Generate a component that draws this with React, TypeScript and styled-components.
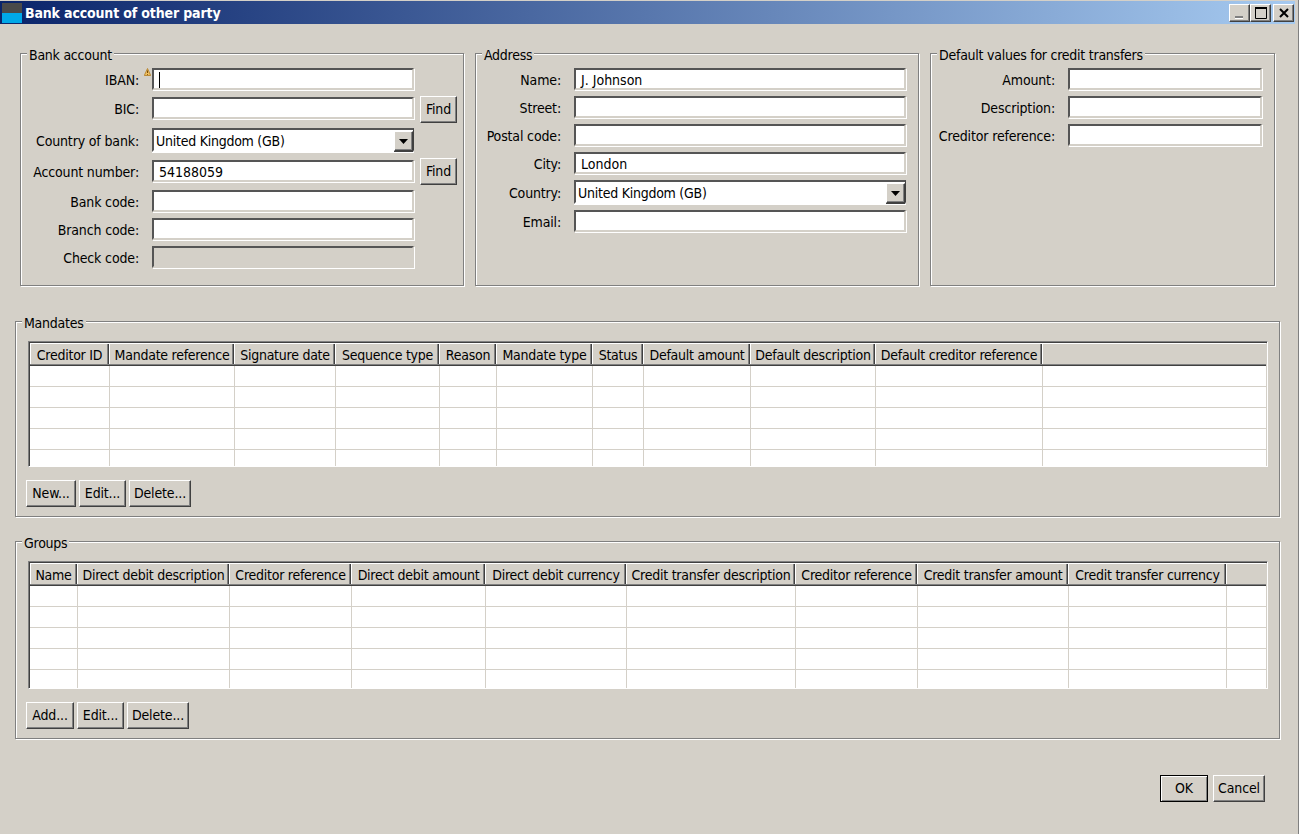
import React from "react";
import styled, { createGlobalStyle } from "styled-components";

const Global = createGlobalStyle`
  html, body { margin: 0; padding: 0; background: #d4d0c8; }
  * { box-sizing: border-box; }
`;

const Window = styled.div`
  width: 1299px;
  height: 834px;
  overflow: hidden;
  background: #d4d0c8;
  border-right: 1px solid #808080;
  font-family: "DejaVu Sans", "Noto Sans", sans-serif;
  font-stretch: condensed;
  font-size: 14px;
  letter-spacing: -0.15px;
  color: #000;
  display: flex;
  flex-direction: column;
`;

const TitleBar = styled.header`
  height: 23px;
  margin: 1px 3px 0 0;
  padding: 0 1px 0 2px;
  flex: none;
  display: flex;
  align-items: center;
  background: linear-gradient(90deg, #0a246a 0%, #a6caf0 100%);
`;

const AppIcon = styled.svg`
  width: 20px;
  height: 20px;
  flex: none;
`;

const Title = styled.span`
  margin-left: 3px;
  color: #fff;
  font-weight: 700;
  letter-spacing: -0.15px;
  flex: 1;
`;

const CaptionButton = styled.button<{ $gap?: number }>`
  width: 21px;
  height: 18px;
  margin-left: ${(p) => p.$gap ?? 0}px;
  padding: 0;
  display: flex;
  align-items: center;
  justify-content: center;
  background: #d4d0c8;
  border: 1px solid;
  border-color: #fff #404040 #404040 #fff;
  box-shadow: inset -1px -1px 0 #808080;
`;

const Content = styled.main`
  flex: 1;
  padding: 29px 18px 0 15px;
  display: flex;
  flex-direction: column;
`;

const TopRow = styled.div`
  display: flex;
  gap: 11px;
  padding: 0 5px;
`;

const Group = styled.section<{ $w: number; $h: number; $mt?: number }>`
  position: relative;
  flex: none;
  width: ${(p) => p.$w}px;
  height: ${(p) => p.$h}px;
  margin-top: ${(p) => p.$mt ?? 0}px;
  border: 1px solid #808080;
  box-shadow: inset 1px 1px 0 #fff, 1px 1px 0 #fff;
`;

const GroupTitle = styled.span`
  position: absolute;
  left: 6px;
  top: -7px;
  padding: 0 2px;
  height: 16px;
  line-height: 16px;
  letter-spacing: -0.25px;
  background: #d4d0c8;
  white-space: nowrap;
`;

const Form = styled.div<{ $label: number }>`
  display: grid;
  grid-template-columns: ${(p) => p.$label}px auto;
  justify-content: start;
  padding-top: 14px;
`;

const Label = styled.label<{ $h: number; $mb: number }>`
  height: ${(p) => p.$h}px;
  margin-bottom: ${(p) => p.$mb}px;
  padding-right: 13px;
  display: flex;
  align-items: center;
  justify-content: flex-end;
  position: relative;
  white-space: nowrap;
`;

const FieldCell = styled.div<{ $h: number; $mb: number }>`
  height: ${(p) => p.$h}px;
  margin-bottom: ${(p) => p.$mb}px;
  display: flex;
  align-items: flex-start;
`;

const Sunken = styled.div<{ $disabled?: boolean; $combo?: boolean; $h: number; $w: number }>`
  flex: none;
  width: ${(p) => p.$w}px;
  height: ${(p) => p.$h - 1}px;
  padding: 1px 0 0 ${(p) => (p.$combo ? 2 : 5)}px;
  display: flex;
  align-items: center;
  background: ${(p) => (p.$disabled ? "#d4d0c8" : "#fff")};
  border-style: solid;
  border-width: ${(p) => (p.$combo ? "2px 1px 2px 2px" : "2px")};
  border-color: ${(p) => (p.$combo ? "#555 #404040 #fff #555" : "#555 #d4d0c8 #d4d0c8 #555")};
  box-shadow: ${(p) => (p.$combo ? "0 1px 0 #fff" : "1px 1px 0 #fff")};
  letter-spacing: 0;
  white-space: nowrap;
`;

const Caret = styled.span`
  width: 1px;
  height: 16px;
  background: #000;
`;

const WarnBadge = styled.svg`
  position: absolute;
  right: 1px;
  top: 0;
  width: 7px;
  height: 8px;
`;

const ComboText = styled.span`
  letter-spacing: -0.25px;
`;

const ComboArrow = styled.div`
  width: 19px;
  height: 20px;
  margin-left: auto;
  align-self: flex-start;
  display: flex;
  align-items: center;
  justify-content: center;
  background: #d4d0c8;
  border: 1px solid;
  border-color: #fff #404040 #404040 #fff;
  box-shadow: inset -1px -1px 0 #808080, 0 1px 0 #404040;
`;

const Button = styled.button<{ $w: number; $default?: boolean }>`
  width: ${(p) => p.$w}px;
  height: 27px;
  flex: none;
  padding: 0 0 2px;
  font: inherit;
  letter-spacing: inherit;
  color: #000;
  background: #d4d0c8;
  border: 1px solid;
  border-color: ${(p) => (p.$default ? "#000" : "#fff #404040 #404040 #fff")};
  box-shadow: ${(p) =>
    p.$default
      ? "inset 1px 1px 0 #fff, inset -1px -1px 0 #808080"
      : "inset -1px -1px 0 #808080"};
`;

const FindButton = styled(Button)<{ $up: number }>`
  margin-left: 6px;
  margin-top: -${(p) => p.$up}px;
`;

const TableFrame = styled.div<{ $h: number }>`
  margin: 19px 11px 0 12px;
  height: ${(p) => p.$h}px;
  padding: 1px;
  overflow: hidden;
  border: 1px solid;
  border-color: #808080 #fff #fff #808080;
  background: #fff;
  box-shadow: inset 1px 1px 0 #404040, inset -1px -1px 0 #d4d0c8;
`;

const HeaderRow = styled.div<{ $cols: string }>`
  display: grid;
  grid-template-columns: ${(p) => p.$cols};
  height: 23px;
  border-bottom: 1px solid #404040;
  background: #808080;
`;

const HeaderCell = styled.div`
  height: 21px;
  padding-top: 1px;
  line-height: 21px;
  letter-spacing: -0.25px;
  text-align: center;
  white-space: nowrap;
  overflow: hidden;
  background: #d4d0c8;
  border-top: 1px solid #fff;
  border-right: 1px solid #fff;
  box-shadow: inset -1px 0 0 #404040, inset -2px 0 0 #808080;
  &:first-child {
    box-shadow: inset -1px 0 0 #404040, inset -2px 0 0 #808080, inset 1px 0 0 #fff;
  }
  &:last-child {
    border-right: none;
    box-shadow: none;
  }
`;

const BodyRow = styled.div<{ $cols: string }>`
  display: grid;
  grid-template-columns: ${(p) => p.$cols};
  height: 21px;
  background: #fff;
  border-bottom: 1px solid #d4d0c8;
`;

const BodyCell = styled.div`
  border-right: 1px solid #d4d0c8;
  &:last-child {
    border-right: none;
  }
`;

const ButtonRow = styled.div`
  display: flex;
  gap: 3px;
  margin: 13px 0 0 10px;
`;

const Footer = styled.footer`
  display: flex;
  justify-content: flex-end;
  gap: 5px;
  margin-top: 36px;
  padding-right: 15px;
`;

type Row = {
  label: string;
  value?: string;
  kind?: "combo" | "disabled" | "caret";
  findUp?: number;
  h: number;
  mb: number;
  warn?: boolean;
};

const FormRows = ({ rows, width }: { rows: Row[]; width: number }) => (
  <>
    {rows.map((r) => (
      <React.Fragment key={r.label}>
        <Label $h={r.h} $mb={r.mb}>
          {r.label}
          {r.warn && (
            <WarnBadge viewBox="0 0 7 8">
              <path d="M3.5 0.5 L6.7 7.5 L0.3 7.5 Z" fill="#f0c060" stroke="#b07a20" strokeWidth="0.8" />
              <path d="M3.5 2.5 V5 M3.5 6 V6.8" stroke="#6a4000" strokeWidth="0.9" />
            </WarnBadge>
          )}
        </Label>
        <FieldCell $h={r.h} $mb={r.mb}>
          <Sunken $w={width} $h={r.h} $disabled={r.kind === "disabled"} $combo={r.kind === "combo"}>
            {r.kind === "caret" && <Caret />}
            {r.kind === "combo" ? <ComboText>{r.value}</ComboText> : r.value && <span>{r.value}</span>}
            {r.kind === "combo" && (
              <ComboArrow>
                <svg width="9" height="5" viewBox="0 0 9 5"><path d="M0 0H9L4.5 5Z" fill="#000" /></svg>
              </ComboArrow>
            )}
          </Sunken>
          {r.findUp !== undefined && <FindButton $w={37} $up={r.findUp}>Find</FindButton>}
        </FieldCell>
      </React.Fragment>
    ))}
  </>
);

const DataTable = ({ widths, titles, height }: { widths: number[]; titles: string[]; height: number }) => {
  const template = widths.map((w) => `${w}px`).join(" ") + " 1fr";
  return (
    <TableFrame $h={height}>
      <HeaderRow $cols={template}>
        {titles.map((t, i) => (
          <HeaderCell key={`${t}-${i}`}>{t}</HeaderCell>
        ))}
        <HeaderCell />
      </HeaderRow>
      {[0, 1, 2, 3, 4].map((r) => (
        <BodyRow key={r} $cols={template}>
          {[...widths, 0].map((_, i) => (
            <BodyCell key={i} />
          ))}
        </BodyRow>
      ))}
    </TableFrame>
  );
};

const bankRows: Row[] = [
  { label: "IBAN:", kind: "caret", h: 23, mb: 6, warn: true },
  { label: "BIC:", h: 23, mb: 8, findUp: 1 },
  { label: "Country of bank:", value: "United Kingdom (GB)", kind: "combo", h: 25, mb: 7 },
  { label: "Account number:", value: "54188059", h: 23, mb: 7, findUp: 2 },
  { label: "Bank code:", h: 23, mb: 5 },
  { label: "Branch code:", h: 23, mb: 5 },
  { label: "Check code:", kind: "disabled", h: 23, mb: 0 },
];

const addressRows: Row[] = [
  { label: "Name:", value: "J. Johnson", h: 23, mb: 5 },
  { label: "Street:", h: 23, mb: 5 },
  { label: "Postal code:", h: 23, mb: 5 },
  { label: "City:", value: "London", h: 23, mb: 5 },
  { label: "Country:", value: "United Kingdom (GB)", kind: "combo", h: 25, mb: 5 },
  { label: "Email:", h: 23, mb: 0 },
];

const defaultRows: Row[] = [
  { label: "Amount:", h: 23, mb: 5 },
  { label: "Description:", h: 23, mb: 5 },
  { label: "Creditor reference:", h: 23, mb: 0 },
];

const mandateTitles = ["Creditor ID", "Mandate reference", "Signature date", "Sequence type", "Reason", "Mandate type", "Status", "Default amount", "Default description", "Default creditor reference"];
const mandateWidths = [80, 125, 101, 104, 57, 96, 51, 107, 125, 167];
const groupTitles = ["Name", "Direct debit description", "Creditor reference", "Direct debit amount", "Direct debit currency", "Credit transfer description", "Creditor reference", "Credit transfer amount", "Credit transfer currency"];
const groupWidths = [48, 152, 122, 134, 141, 169, 122, 151, 158];

export default function App() {
  return (
    <Window>
      <Global />
      <TitleBar>
        <AppIcon viewBox="0 0 20 20">
          <rect width="20" height="10" fill="#4a4a4a" />
          <rect y="10" width="20" height="10" fill="#00a8e8" />
        </AppIcon>
        <Title>Bank account of other party</Title>
        <CaptionButton aria-label="Minimize">
          <svg width="11" height="12" viewBox="0 0 11 12">
            <rect x="1" y="9" width="8" height="2" fill="#808080" />
            <rect x="1" y="11" width="8" height="1" fill="#fff" />
          </svg>
        </CaptionButton>
        <CaptionButton aria-label="Maximize">
          <svg width="12" height="12" viewBox="0 0 12 12">
            <path d="M0.5 1.5H11.5V11.5H0.5Z" fill="none" stroke="#000" />
            <rect width="12" height="2" fill="#000" />
          </svg>
        </CaptionButton>
        <CaptionButton $gap={2} aria-label="Close">
          <svg width="10" height="10" viewBox="0 0 10 10"><path d="M1 1L9 9M9 1L1 9" stroke="#000" strokeWidth="2" /></svg>
        </CaptionButton>
      </TitleBar>
      <Content>
        <TopRow>
          <Group $w={444} $h={233}>
            <GroupTitle>Bank account</GroupTitle>
            <Form $label={131}>
              <FormRows rows={bankRows} width={262} />
            </Form>
          </Group>
          <Group $w={444} $h={233}>
            <GroupTitle>Address</GroupTitle>
            <Form $label={98}>
              <FormRows rows={addressRows} width={332} />
            </Form>
          </Group>
          <Group $w={345} $h={233}>
            <GroupTitle>Default values for credit transfers</GroupTitle>
            <Form $label={137}>
              <FormRows rows={defaultRows} width={194} />
            </Form>
          </Group>
        </TopRow>
        <Group $h={196} $mt={35} $w={1265}>
          <GroupTitle>Mandates</GroupTitle>
          <DataTable widths={mandateWidths} titles={mandateTitles} height={126} />
          <ButtonRow>
            <Button $w={50}>New...</Button>
            <Button $w={47}>Edit...</Button>
            <Button $w={62}>Delete...</Button>
          </ButtonRow>
        </Group>
        <Group $h={198} $mt={24} $w={1265}>
          <GroupTitle>Groups</GroupTitle>
          <DataTable widths={groupWidths} titles={groupTitles} height={128} />
          <ButtonRow>
            <Button $w={48}>Add...</Button>
            <Button $w={47}>Edit...</Button>
            <Button $w={62}>Delete...</Button>
          </ButtonRow>
        </Group>
        <Footer>
          <Button $w={48} $default>OK</Button>
          <Button $w={52}>Cancel</Button>
        </Footer>
      </Content>
    </Window>
  );
}
